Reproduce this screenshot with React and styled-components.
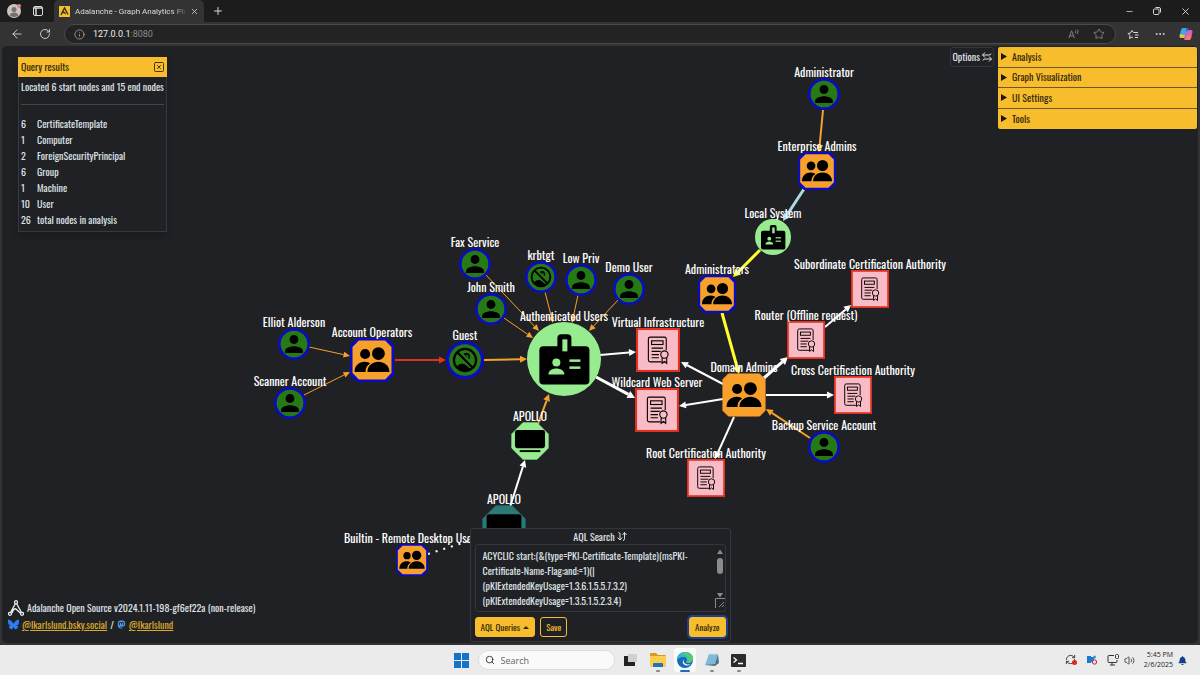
import styled, { createGlobalStyle, css } from 'styled-components'
import {
  ArrowLeft, RotateCw, Info, Star, Ellipsis, Minus, X, Plus, Search as SearchGlyph,
  Volume2, RefreshCw, SquareX,
} from 'lucide-react'
import { MdPerson } from 'react-icons/md'
import { FaBell, FaMastodon } from 'react-icons/fa'
import { FaBluesky } from 'react-icons/fa6'

const GlobalStyle = createGlobalStyle`
*{ box-sizing:border-box; }
body{
  margin:0;
  background:#333;
  font-family:Oswald, "Roboto Condensed", sans-serif;
  font-size:10px;
  color:#dee2e6;
}
button, input, textarea{ font:inherit; color:inherit; margin:0; }
svg{ display:block; flex-shrink:0; }
`

const Desktop = styled.div`
display:flex;
flex-direction:column;
min-height:100vh;
`

// ---------- browser window ----------
const TitleBar = styled.header`
display:flex;
align-items:center;
height:22px;
padding-right:1px;
background:#1c1c1c;
color:#ddd;
font-family:Roboto, sans-serif;
font-size:8px;
`
const IconButton = styled.button`
display:flex;
align-items:center;
justify-content:center;
width:${p => p.$w || 28}px;
height:20px;
padding:0;
border:none;
background:none;
color:${p => p.$dim ? '#888' : '#d8d8d8'};
`
const Tab = styled.div`
display:flex;
align-items:center;
gap:5px;
width:150px;
height:22px;
margin-left:6px;
padding:0 5px;
border-radius:5px 5px 0 0;
background:#333;
`
const TabTitle = styled.span`
flex:1;
min-width:0;
white-space:nowrap;
mask-image:linear-gradient(to right, #000 88%, #0004);
`
const Spacer = styled.div`flex:1;`

const ToolBar = styled.nav`
display:flex;
align-items:center;
height:24px;
padding:0 2px 0 3px;
background:#333;
`
const AddressBar = styled.div`
display:flex;
align-items:center;
flex:1;
height:20px;
margin:0 4px 0 5px;
padding:0 3px 0 9px;
border:1px solid #4a4a4a;
border-radius:10px;
background:#232323;
color:#bbb;
font-family:Roboto, sans-serif;
font-size:9px;
`
const Address = styled.span`
flex:1;
margin-left:8px;
color:#8a8a8a;
b{ font-weight:400; color:#eee; }
`

// ---------- page ----------
const Viewport = styled.main`
position:relative;
display:flex;
flex:1;
padding:0 2px 2px;
background:#333;
`
const Surface = styled.div`
flex:1;
border-radius:5px;
background:#202124;
`
const GraphLayer = styled.div`
position:absolute;
inset:0;
overflow:hidden;
`
const EdgeLayer = styled.svg`
position:absolute;
inset:0;
width:100%;
height:100%;
`
const NodeBox = styled.div.attrs(p => ({ style: { left: p.$x, top: p.$y } }))`
position:absolute;
width:${p => p.$size}px;
height:${p => p.$size}px;
transform:translate(-50%, -50%);
`
const NodeLabel = styled.span`
position:absolute;
bottom:100%;
left:50%;
transform:translateX(-50%);
white-space:nowrap;
font-size:12px;
line-height:12px;
color:#fff;
`

const floating = css`
position:absolute;
background:#202124;
`
const Results = styled.section`
${floating}
top:11px;
left:18px;
border:1px solid #363a40;
box-shadow:0 4px 8px #0003;
`
const ResultsHead = styled.div`
display:flex;
align-items:center;
justify-content:space-between;
height:20px;
margin:-1px;
padding:0 2px 0 3px;
background:#f8bd2d;
color:#33290c;
line-height:16px;
`
const ResultsBody = styled.div`
padding:3px 2px;
hr{ height:1px; margin:9px 0 11px; border:none; background:#43464a; }
p{ margin:0; line-height:16px; }
`
const ResultsTable = styled.table`
border-collapse:collapse;
td{ padding:0; height:16px; line-height:16px; }
td:first-child{ width:16px; }
`
const OptionsPane = styled.aside`
position:absolute;
top:1px;
right:3px;
display:flex;
align-items:flex-start;
gap:4px;
`
const OptionsButton = styled.button`
display:flex;
align-items:center;
gap:2px;
height:20px;
padding:0 1px;
border:1px solid #33373d;
border-radius:3px;
background:#202124;
line-height:16px;
`
const Accordion = styled.div`
display:grid;
grid-auto-rows:1fr;
width:199px;
height:82px;
border-radius:2px;
overflow:hidden;
background:#f8bd2d;
`
const AccordionItem = styled.button`
display:flex;
align-items:center;
gap:5px;
padding:0 3px;
border:none;
border-bottom:${p => p.$last ? 'none' : '1px solid #6b5a26'};
background:none;
color:#33290c;
line-height:16px;
`
const Credits = styled.footer`
position:absolute;
left:8px;
bottom:12px;
`
const CreditLine = styled.div`
display:flex;
align-items:center;
gap:3px;
height:17px;
line-height:16px;
a{ color:#dba92c; }
`

const QueryDock = styled.div`
position:absolute;
left:0;
right:0;
bottom:3px;
display:flex;
justify-content:center;
pointer-events:none;
`
const QueryPanel = styled.form`
width:261px;
padding:0 4px 4px;
border:1px solid #33373d;
border-radius:3px;
background:#202124;
pointer-events:auto;
`
const QueryTitle = styled.label`
display:flex;
align-items:center;
justify-content:center;
gap:2px;
height:15px;
`
const QueryField = styled.div`
display:flex;
height:68px;
border:1px solid #33373d;
border-radius:3px;
`
const QueryText = styled.textarea`
flex:1;
min-width:0;
padding:3px 0 0 7px;
border:none;
outline:none;
resize:none;
overflow:hidden;
background:none;
line-height:15px;
`
const Scroller = styled.div`
display:flex;
flex-direction:column;
align-items:center;
width:10px;
padding-top:4px;
`
const ScrollThumb = styled.span`
width:6px;
height:16px;
margin:3px 0 18px;
border-radius:3px;
background:#8b8b8b;
`
const QueryActions = styled.div`
display:flex;
gap:5px;
margin-top:5px;
`
const Button = styled.button`
display:flex;
align-items:center;
gap:3px;
height:20px;
padding:0 5px;
border:1px solid #f8bd2d;
border-radius:3px;
background:${p => p.$outline ? 'none' : '#f8bd2d'};
color:${p => p.$outline ? '#f8bd2d' : '#33290c'};
font-size:9px;
box-shadow:${p => p.$focus ? '0 0 0 2px #1c3f94' : 'none'};
`

// ---------- taskbar ----------
const TaskBar = styled.footer`
display:grid;
grid-template-columns:1fr auto 1fr;
align-items:center;
height:30px;
background:#ebebeb;
color:#222;
font-family:"Open Sans", sans-serif;
`
const TaskItems = styled.div`
grid-column:2;
display:flex;
align-items:center;
gap:5px;
`
const TaskItem = styled.button`
display:flex;
flex-direction:column;
align-items:center;
justify-content:center;
position:relative;
width:22px;
height:24px;
padding:0;
border:none;
border-radius:3px;
background:${p => p.$active ? '#fafafa' : 'none'};
&::after{
  content:'';
  display:${p => p.$open ? 'block' : 'none'};
  position:absolute;
  bottom:0;
  width:${p => p.$active ? 10 : 4}px;
  height:2px;
  border-radius:1px;
  background:${p => p.$active ? '#1f6cc0' : '#888'};
}
`
const TaskSearch = styled.label`
display:flex;
align-items:center;
gap:6px;
width:137px;
height:20px;
padding:0 6px;
border:1px solid #dedede;
border-radius:10px;
background:#fafafa;
input{ width:90px; padding:0; border:none; outline:none; background:none; font-size:9px; }
input::placeholder{ color:#666; opacity:1; }
`
const Tray = styled.div`
display:flex;
align-items:center;
justify-content:flex-end;
gap:5px;
padding-right:13px;
`
const Clock = styled.time`
margin-left:4px;
text-align:right;
font-size:7px;
line-height:10px;
`

const nodes = [
  { kind: 'user', label: 'Administrator', x: 824, y: 48, size: 32 },
  { kind: 'group', label: 'Enterprise Admins', x: 817, y: 125, size: 38, ring: true },
  { kind: 'badge', label: 'Local System', x: 773, y: 191, size: 36 },
  { kind: 'user', label: 'Fax Service', x: 475, y: 218, size: 32 },
  { kind: 'blocked', label: 'krbtgt', x: 541, y: 231, size: 32 },
  { kind: 'user', label: 'Low Priv', x: 581, y: 234, size: 32 },
  { kind: 'user', label: 'Demo User', x: 629, y: 243, size: 32 },
  { kind: 'user', label: 'John Smith', x: 491, y: 263, size: 32 },
  { kind: 'user', label: 'Elliot Alderson', x: 294, y: 298, size: 32 },
  { kind: 'user', label: 'Scanner Account', x: 290, y: 357, size: 32 },
  { kind: 'group', label: 'Account Operators', x: 372, y: 314, size: 44, ring: true },
  { kind: 'blocked', label: 'Guest', x: 465, y: 314, size: 38 },
  { kind: 'badge', label: 'Authenticated Users', x: 564, y: 313, size: 74 },
  { kind: 'template', label: 'Virtual Infrastructure', x: 658, y: 304, size: 44 },
  { kind: 'template', label: 'Wildcard Web Server', x: 657, y: 364, size: 44 },
  { kind: 'group', label: 'Administrators', x: 717, y: 248, size: 38, ring: true },
  { kind: 'template', label: 'Subordinate Certification Authority', x: 870, y: 243, size: 38 },
  { kind: 'template', label: 'Router (Offline request)', x: 806, y: 294, size: 38 },
  { kind: 'group', label: 'Domain Admins', x: 744, y: 349, size: 44 },
  { kind: 'template', label: 'Cross Certification Authority', x: 853, y: 349, size: 38 },
  { kind: 'user', label: 'Backup Service Account', x: 824, y: 401, size: 32 },
  { kind: 'template', label: 'Root Certification Authority', x: 706, y: 432, size: 38 },
  { kind: 'machine', label: 'APOLLO', x: 530, y: 395, size: 38, fill: '#98ec90' },
  { kind: 'machine', label: 'APOLLO', x: 504, y: 481, size: 44, fill: '#2b7a78' },
  { kind: 'group', label: 'Builtin - Remote Desktop Users', x: 412, y: 514, size: 32, ring: true },
]

// from, to, colour, width
const edges = [
  [823, 64, 819, 106, '#f5a12c', 2],
  [804, 143, 783, 175, '#add8e6', 3],
  [760, 204, 733, 231, '#ffff2e', 3],
  [722, 267, 739, 328, '#ffff2e', 3],
  [486, 229, 539, 285, '#f5a12c', 1],
  [504, 272, 533, 292, '#f5a12c', 1],
  [545, 246, 553, 277, '#f5a12c', 1],
  [578, 249, 572, 277, '#f5a12c', 1],
  [618, 254, 589, 285, '#f5a12c', 1],
  [309, 301, 350, 310, '#f5a12c', 1],
  [304, 349, 350, 326, '#f5a12c', 1],
  [395, 314, 446, 314, '#e0301e', 2],
  [484, 314, 527, 313, '#f5a12c', 2],
  [600, 309, 636, 306, '#fff', 2],
  [596, 331, 635, 352, '#fff', 3],
  [723, 338, 681, 316, '#fff', 2],
  [723, 353, 679, 360, '#fff', 2],
  [764, 332, 788, 311, '#fff', 3],
  [825, 281, 851, 259, '#fff', 2],
  [766, 349, 834, 349, '#fff', 2],
  [734, 371, 715, 413, '#fff', 2],
  [810, 392, 766, 363, '#f5a12c', 2],
  [538, 378, 549, 348, '#f5a12c', 2],
  [510, 461, 525, 414, '#fff', 2],
]

function Edge({ edge }) {
  const [x1, y1, x2, y2, color, width] = edge
  const length = Math.hypot(x2 - x1, y2 - y1)
  const ux = (x2 - x1) / length
  const uy = (y2 - y1) / length
  const head = 6 + width / 2
  const half = 2.5 + width / 2
  const bx = x2 - ux * head
  const by = y2 - uy * head
  return (
    <g stroke={color} fill={color}>
      <line x1={x1} y1={y1} x2={bx} y2={by} strokeWidth={width} />
      <polygon stroke="none" points={`${x2},${y2} ${bx - uy * half},${by + ux * half} ${bx + uy * half},${by - ux * half}`} />
    </g>
  )
}

const octagon = (c) => `${c},1 ${48 - c},1 47,${c} 47,${48 - c} ${48 - c},47 ${c},47 1,${48 - c} 1,${c}`

// every shape is drawn on a 48 unit box and scaled to the node
const shapes = {
  user: () => (
    <>
      <circle cx="24" cy="24" r="22" fill="#267a15" stroke="#0b0bc4" strokeWidth="4" />
      <MdPerson x="4" y="4" size="40" color="#000" />
    </>
  ),
  blocked: () => (
    <>
      <circle cx="24" cy="24" r="22" fill="#267a15" stroke="#0b0bc4" strokeWidth="4" />
      <path d="M14 33c1-4 5-5 9-4l8 6q-8 6-17-2z" fill="#000" />
      <path d="M22 16.500q4-3 7-.5 2.500 3 .5 7z" fill="#000" />
      <path d="M25 18q3 0 3 3" fill="none" stroke="#267a15" strokeWidth="1.5" />
      <circle cx="24" cy="24" r="14" fill="none" stroke="#000" strokeWidth="2.8" />
      <path d="M14 14l20 20" stroke="#000" strokeWidth="2.8" />
    </>
  ),
  group: ({ ring }) => (
    <>
      <polygon points={ring ? octagon(9) : octagon(7)} fill="#f8a02c" stroke={ring ? '#0b0bc4' : '#f8a02c'} strokeWidth={ring ? 3.5 : 1} />
      <circle cx="16.5" cy="17.5" r="5.5" />
      <path d="M5 37c0-7 5-11 11-11 3 0 5 1 6 2-4 2-5 5-5 9z" />
      <circle cx="31" cy="17" r="7" />
      <path d="M19 37c0-7 6-11 12-11s12 4 12 11z" />
    </>
  ),
  badge: () => (
    <>
      <circle cx="24" cy="24" r="24" fill="#98ec90" />
      <g transform="translate(8 8) scale(.65)">
        <rect x="0" y="12" width="50" height="38" rx="4" />
        <rect x="18" y="0" width="14" height="24" rx="4" />
        <g fill="#98ec90">
          <rect x="23" y="5" width="5" height="12" />
          <circle cx="17" cy="28" r="4" />
          <path d="M9 40c0-4 4-6 8-6s8 2 8 6z" />
          <rect x="30" y="25" width="11" height="2.5" />
          <rect x="30" y="32" width="11" height="2.5" />
        </g>
      </g>
    </>
  ),
  template: () => (
    <>
      <rect x="1" y="1" width="46" height="46" fill="#f9bcc6" stroke="#e2301f" strokeWidth="2.5" />
      <g fill="none" stroke="#000" strokeWidth="1.2">
        <path d="M28 37H15.500q-2 0-2-2V12q0-2 2-2H31q2 0 2 2v12" />
        <rect x="17" y="14" width="12.500" height="4" />
        <path d="M17 22h12.500M17 25.500h10M17 29h8M17 32.500h8" />
        <circle cx="31" cy="29" r="4" />
        <path d="M28.500 32.500v6l2.500-2 2.500 2v-6" />
      </g>
    </>
  ),
  machine: ({ fill }) => (
    <>
      <polygon points={octagon(15)} fill={fill} stroke={fill} strokeWidth="1" />
      <rect x="5" y="10" width="38" height="23" rx="3" />
      <rect x="11" y="35.500" width="26" height="2.500" />
    </>
  ),
}

function GraphNode({ node }) {
  const Shape = shapes[node.kind]
  return (
    <NodeBox $x={node.x} $y={node.y} $size={node.size}>
      <svg viewBox="0 0 48 48" width="100%" height="100%"><Shape {...node} /></svg>
      <NodeLabel>{node.label}</NodeLabel>
    </NodeBox>
  )
}

const results = [
  [6, 'CertificateTemplate'],
  [1, 'Computer'],
  [2, 'ForeignSecurityPrincipal'],
  [6, 'Group'],
  [1, 'Machine'],
  [10, 'User'],
  [26, 'total nodes in analysis'],
]

const sections = ['Analysis', 'Graph Visualization', 'UI Settings', 'Tools']

const query = `ACYCLIC start:(&(type=PKI-Certificate-Template)(msPKI-
Certificate-Name-Flag:and:=1)(|
(pKIExtendedKeyUsage=1.3.6.1.5.5.7.3.2)
(pKIExtendedKeyUsage=1.3.5.1.5.2.3.4)`

function Triangle({ down }) {
  return <svg width="6" height="6" viewBox="0 0 6 6"><path d={down ? 'M0 1h6L3 5.500z' : 'M0 5h6L3 .5z'} fill="#8b8b8b" /></svg>
}

function Browser() {
  return (
    <>
      <TitleBar>
        <IconButton aria-label="Profile">
          <svg width="14" height="14" viewBox="0 0 14 14">
            <circle cx="7" cy="7" r="7" fill="#c9c5c3" />
            <circle cx="7" cy="5.500" r="2.500" fill="#77706d" />
            <path d="M2.500 11.500q1-3 4.500-3t4.500 3q-4 3-9 0z" fill="#77706d" />
            <circle cx="12" cy="2" r="2" fill="#d88a8a" />
          </svg>
        </IconButton>
        <IconButton $w={20} aria-label="Tab actions">
          <svg width="10" height="10" viewBox="0 0 10 10" fill="none" stroke="currentColor">
            <rect x=".5" y=".5" width="9" height="9" rx="1.500" />
            <path d="M.5 2h9M3 2.500v7" strokeWidth="1.500" />
          </svg>
        </IconButton>
        <Tab>
          <svg width="11" height="11" viewBox="0 0 11 11">
            <rect width="11" height="11" fill="#f0c22e" />
            <path d="M2 9l3.500-7L9 8.500M3.500 7q2-2 3 1" fill="none" stroke="#332b10" strokeWidth="1.300" />
          </svg>
          <TabTitle>Adalanche - Graph Analytics Platf</TabTitle>
          <X size={9} />
        </Tab>
        <IconButton aria-label="New tab"><Plus size={12} /></IconButton>
        <Spacer />
        <IconButton aria-label="Minimize"><Minus size={9} /></IconButton>
        <IconButton aria-label="Restore">
          <svg width="8" height="8" viewBox="0 0 8 8" fill="none" stroke="currentColor">
            <rect x=".5" y="2" width="5.500" height="5.500" rx="1" />
            <path d="M2.500 .5H6q1.500 0 1.500 1.500v3.500" />
          </svg>
        </IconButton>
        <IconButton aria-label="Close"><X size={11} /></IconButton>
      </TitleBar>
      <ToolBar>
        <IconButton aria-label="Back"><ArrowLeft size={14} strokeWidth={1.5} /></IconButton>
        <IconButton aria-label="Reload"><RotateCw size={12} strokeWidth={1.8} /></IconButton>
        <AddressBar>
          <Info size={11} strokeWidth={1.5} />
          <Address><b>127.0.0.1</b>:8080</Address>
          <IconButton $dim $w={25} aria-label="Read aloud">
            <svg width="11" height="11" viewBox="0 0 12 12" fill="none" stroke="currentColor">
              <path d="M1 10l3-8 3 8M2 7.500h4M8 1.500q1 1 0 3M10 .5q2 2 0 5" />
            </svg>
          </IconButton>
          <IconButton $dim $w={26} aria-label="Favorite"><Star size={12} strokeWidth={1.8} /></IconButton>
        </AddressBar>
        <IconButton $w={26} aria-label="Favorites">
          <svg width="12" height="11" viewBox="0 0 12 11" fill="none" stroke="currentColor">
            <path d="M6 8.500L5 8 2.500 9.500 3 6.500 1 4.500l2.500-.5L5 1.500 6.500 3.500H11M8 6H11.500M8 8.500H11" />
          </svg>
        </IconButton>
        <IconButton aria-label="Settings"><Ellipsis size={12} /></IconButton>
        <IconButton $w={24} aria-label="Copilot">
          <svg width="14" height="14" viewBox="0 0 14 14">
            <path d="M4 1h4q1 0 1.300 1L7 9q-.5 2-2 2H2Q0 11 .5 9L2 3q.5-2 2-2z" fill="#38a8e8" />
            <path d="M1 7l5 1-1 3H2Q0 11 1 7z" fill="#e8c23c" />
            <path d="M9 3h3q2 0 1.500 2L12 11q-.5 2-2 2H6q-1 0-1-2l2.500-6q.5-2 1.500-2z" fill="#d860b8" />
            <path d="M8 8l4.500 1-.5 2q-.5 2-2 2H6q1 0 2-5z" fill="#f0825a" />
            <path d="M7 1h1q1.500 0 2 2-2 0-2.500 2z" fill="#2a58d8" />
          </svg>
        </IconButton>
      </ToolBar>
    </>
  )
}

function TaskBarRow() {
  return (
    <TaskBar>
      <TaskItems>
        <TaskItem aria-label="Start">
          <svg width="15" height="15" viewBox="0 0 15 15" fill="#1473c8">
            <path d="M0 0h7v7H0zM8 0h7v7H8zM0 8h7v7H0zM8 8h7v7H8z" />
          </svg>
        </TaskItem>
        <TaskSearch>
          <SearchGlyph size={10} />
          <input type="text" placeholder="Search" aria-label="Search" />
        </TaskSearch>
        <TaskItem aria-label="Task view">
          <svg width="13" height="12" viewBox="0 0 13 12">
            <rect x="4" y="0" width="9" height="8" fill="#d0d0d0" />
            <path d="M0 2h4v6h7v4H0z" fill="#222" />
          </svg>
        </TaskItem>
        <TaskItem $open aria-label="File Explorer">
          <svg width="16" height="14" viewBox="0 0 16 14">
            <path d="M0 1q0-1 1-1h5l2 2h7q1 0 1 1v3H0z" fill="#d99a25" />
            <rect y="3" width="16" height="11" rx="1" fill="#fbcf4e" />
            <path d="M3 14v-3q0-1 1-1h8q1 0 1 1v3z" fill="#1d74c4" />
          </svg>
        </TaskItem>
        <TaskItem $open $active aria-label="Edge">
          <svg width="16" height="16" viewBox="0 0 16 16">
            <circle cx="8" cy="8" r="8" fill="#1669b8" />
            <path d="M0 8C0 3 4 0 8 0c5 0 8 3 8 6.500C16 9 14 11 11.500 11 9 11 9 10 9.500 9.500 11 7 9 5 6.500 5 3 5 1 7 0 8z" fill="#35b6d0" />
            <path d="M8 0c5 0 8 3 8 6.500C16 9 14 11 11.500 11 9 11 9 10 9.500 9.500 12 6 9 2 4 1q2-1 4-1z" fill="#55c87a" />
            <path d="M6.500 7Q4 12 9 13.500q3 .5 5-1.500-2 1-5 0-3-1-2.500-5z" fill="#fafafa" />
          </svg>
        </TaskItem>
        <TaskItem $open aria-label="Notepad">
          <svg width="16" height="14" viewBox="0 0 16 14">
            <path d="M5 1h9l-3 11H1z" fill="#7db9d8" />
            <path d="M14 1l1 9-4 3-10-1 10-1z" fill="#4f6f86" />
            <path d="M5 0h9v1.500H4.500z" fill="#d5e4ec" />
          </svg>
        </TaskItem>
        <TaskItem $open aria-label="Terminal">
          <svg width="15" height="13" viewBox="0 0 15 13">
            <rect width="15" height="13" rx="1" fill="#2b2b2b" />
            <path d="M2.500 3.500l3 2.500-3 2.500M7 9.500h5" fill="none" stroke="#fff" strokeWidth="1.300" />
          </svg>
        </TaskItem>
      </TaskItems>
      <Tray>
        <svg width="13" height="12" viewBox="0 0 13 12">
          <RefreshCw size={11} strokeWidth={2} color="#333" />
          <circle cx="9.500" cy="8.500" r="2.500" fill="#dc2a20" />
        </svg>
        <svg width="16" height="12" viewBox="-2 0 16 12">
          <path d="M2 2h4v7H2zM6 3h3v5H6z" fill="#1f78cf" />
          <circle cx="9.500" cy="3" r="1.500" fill="#3b93e2" />
          <circle cx="9.500" cy="8" r="2.200" fill="#f0d4d4" stroke="#a83a3a" />
        </svg>
        <svg width="15" height="12" viewBox="-3 0 15 12" fill="none" stroke="#333">
          <path d="M7 1.500H2q-1 0-1 1v5q0 1 1 1h7q1 0 1-1V6M5 9v2M3 11h5" />
          <rect x="8.500" y=".5" width="3" height="4" rx="1" />
        </svg>
        <Volume2 size={11} strokeWidth={1.8} color="#333" />
        <Clock>5:45 PM<br />2/6/2025</Clock>
        <FaBell size={9} color="#123f87" />
      </Tray>
    </TaskBar>
  )
}

function App() {
  return (
    <Desktop>
      <GlobalStyle />
      <Browser />
      <Viewport>
        <Surface />
        <GraphLayer>
          <EdgeLayer>
            {edges.map((edge, index) => <Edge key={index} edge={edge} />)}
            <line x1="428" y1="508" x2="472" y2="494" stroke="#fff" strokeWidth="2" strokeDasharray="2 6" />
          </EdgeLayer>
          {nodes.map((node, index) => <GraphNode key={index} node={node} />)}
        </GraphLayer>

        <Results>
          <ResultsHead>
            Query results
            <IconButton $w={12} aria-label="Close results"><SquareX size={12} strokeWidth={1.8} color="#33290c" /></IconButton>
          </ResultsHead>
          <ResultsBody>
            <p>Located 6 start nodes and 15 end nodes</p>
            <hr />
            <ResultsTable>
              <tbody>
                {results.map(([count, name]) => <tr key={name}><td>{count}</td><td>{name}</td></tr>)}
              </tbody>
            </ResultsTable>
          </ResultsBody>
        </Results>

        <OptionsPane>
          <OptionsButton>
            Options
            <svg width="10" height="10" viewBox="0 0 10 10" fill="none" stroke="currentColor">
              <path d="M3 .5L.5 3 3 5.500M.5 3H7q2 0 2-1.500M7 4.500L9.500 7 7 9.500M9.500 7H3Q1 7 1 8.500" />
            </svg>
          </OptionsButton>
          <Accordion>
            {sections.map((name, index) => (
              <AccordionItem key={name} $last={index === sections.length - 1}>
                <svg width="6" height="7" viewBox="0 0 6 7"><path d="M0 0l6 3.500L0 7z" fill="#1c1708" /></svg>
                {name}
              </AccordionItem>
            ))}
          </Accordion>
        </OptionsPane>

        <Credits>
          <CreditLine>
            <svg width="16" height="16" viewBox="0 0 16 16" fill="none" stroke="#eee" strokeWidth="1.300">
              <path d="M7.500 3.500L2.500 12.500M8.500 3.500l5 9M4 13q2-6 4.500-3.500T13 13.500" />
              <circle cx="8" cy="2.200" r="1.500" />
              <circle cx="2" cy="13.800" r="1.500" />
              <circle cx="14" cy="13.800" r="1.500" />
            </svg>
            Adalanche Open Source v2024.1.11-198-gf6ef22a (non-release)
          </CreditLine>
          <CreditLine>
            <FaBluesky size={11} color="#2b7cf6" />
            <a href="#bluesky">@lkarlslund.bsky.social</a>
            /
            <FaMastodon size={9} color="#4c9be8" />
            <a href="#mastodon">@lkarlslund</a>
          </CreditLine>
        </Credits>

        <QueryDock>
          <QueryPanel onSubmit={e => e.preventDefault()}>
            <QueryTitle htmlFor="aql">
              AQL Search
              <svg width="10" height="9" viewBox="0 0 10 9" fill="none" stroke="currentColor">
                <path d="M.5 5.500L3 8l2-2.500M3 8V2Q3 .5 1.500 .5M5.500 3L7.500 .5 9.500 3M7.500 .5v6q0 2-1.500 2" />
              </svg>
            </QueryTitle>
            <QueryField>
              <QueryText id="aql" defaultValue={query} spellCheck={false} />
              <Scroller>
                <Triangle />
                <ScrollThumb />
                <Triangle down />
                <svg width="10" height="10" viewBox="0 0 10 10" fill="none" stroke="#8b8b8b">
                  <path d="M.5 10V.5H10M4 9l5-5M7 9l2-2" />
                </svg>
              </Scroller>
            </QueryField>
            <QueryActions>
              <Button type="button">AQL Queries <svg width="6" height="3" viewBox="0 0 6 3"><path d="M0 3h6L3 0z" fill="#33290c" /></svg></Button>
              <Button type="button" $outline>Save</Button>
              <Spacer />
              <Button type="submit" $focus>Analyze</Button>
            </QueryActions>
          </QueryPanel>
        </QueryDock>
      </Viewport>
      <TaskBarRow />
    </Desktop>
  )
}

export default App
